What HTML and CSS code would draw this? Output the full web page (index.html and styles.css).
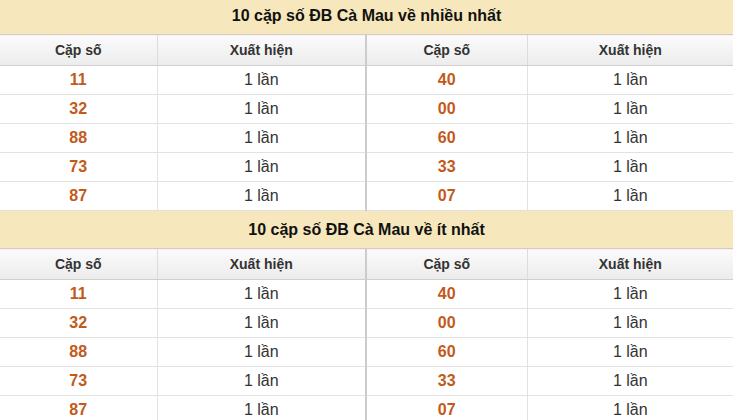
FILE: index.html
```html
<!DOCTYPE html>
<html lang="vi">
<head>
<meta charset="utf-8">
<link rel="stylesheet" href="styles.css">
</head>
<body>
<div class="page">
  <table class="stats">
    <colgroup><col class="c1"><col class="c2"><col class="c3"><col class="c4"></colgroup>
    <tr><th colspan="4" class="title">10 cặp số ĐB Cà Mau về nhiều nhất</th></tr>
    <tr class="head"><th>Cặp số</th><th class="mid">Xuất hiện</th><th>Cặp số</th><th>Xuất hiện</th></tr>
    <tr><td class="num">11</td><td class="mid">1 lần</td><td class="num">40</td><td>1 lần</td></tr>
    <tr><td class="num">32</td><td class="mid">1 lần</td><td class="num">00</td><td>1 lần</td></tr>
    <tr><td class="num">88</td><td class="mid">1 lần</td><td class="num">60</td><td>1 lần</td></tr>
    <tr><td class="num">73</td><td class="mid">1 lần</td><td class="num">33</td><td>1 lần</td></tr>
    <tr><td class="num">87</td><td class="mid">1 lần</td><td class="num">07</td><td>1 lần</td></tr>
    <tr><th colspan="4" class="title">10 cặp số ĐB Cà Mau về ít nhất</th></tr>
    <tr class="head"><th>Cặp số</th><th class="mid">Xuất hiện</th><th>Cặp số</th><th>Xuất hiện</th></tr>
    <tr><td class="num">11</td><td class="mid">1 lần</td><td class="num">40</td><td>1 lần</td></tr>
    <tr><td class="num">32</td><td class="mid">1 lần</td><td class="num">00</td><td>1 lần</td></tr>
    <tr><td class="num">88</td><td class="mid">1 lần</td><td class="num">60</td><td>1 lần</td></tr>
    <tr><td class="num">73</td><td class="mid">1 lần</td><td class="num">33</td><td>1 lần</td></tr>
    <tr><td class="num">87</td><td class="mid">1 lần</td><td class="num">07</td><td>1 lần</td></tr>
  </table>
</div>
</body>
</html>
```
FILE: styles.css
```css
html, body {
  margin: 0;
  padding: 0;
  background: #ffffff;
}
.page {
  margin-top: -3px;
  width: 733px;
  font-family: "Liberation Sans", Arial, sans-serif;
}
.stats {
  width: 733px;
  border-collapse: collapse;
  table-layout: fixed;
}
.c1 { width: 157px; }
.c2 { width: 209px; }
.c3 { width: 161px; }
.c4 { width: 206px; }
.stats th, .stats td {
  padding: 0;
  text-align: center;
  vertical-align: middle;
}
.title {
  height: 37px;
  background: #f6e8bc;
  color: #111;
  font-size: 16px;
  font-weight: bold;
  border-bottom: 1px solid #dcc7c2;
}
.head th {
  height: 30px;
  background: linear-gradient(#fbfbfb, #ececec);
  color: #333;
  font-size: 14px;
  font-weight: bold;
  border-bottom: 1px solid #cfcfcf;
  border-right: 1px solid #dcdcdc;
}
.stats td {
  height: 28px;
  font-size: 16px;
  color: #333;
  border-bottom: 1px solid #e2e2e2;
  border-right: 1px solid #e2e2e2;
}
.stats td:last-child, .head th:last-child {
  border-right: none;
}
.stats .mid {
  border-right: 2px solid #cccccc;
}
.stats td.num {
  color: #c25a1c;
  font-weight: bold;
}
```
